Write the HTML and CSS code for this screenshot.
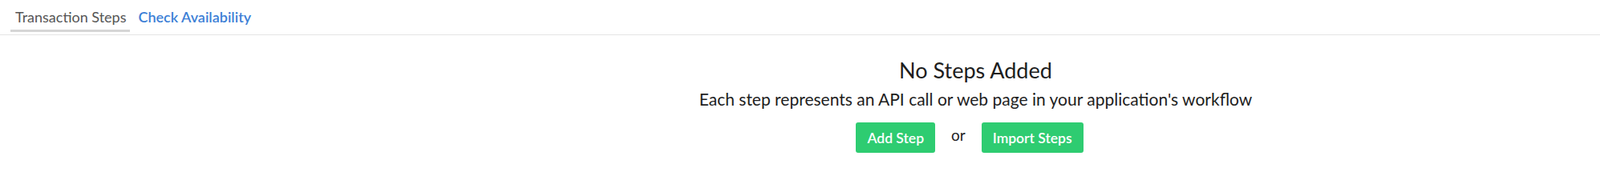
FILE: index.html
```html
<!DOCTYPE html>
<html>
<head>
<meta charset="utf-8">
<link rel="stylesheet" href="styles.css">
</head>
<body>
<nav class="tabs">
  <a class="tab tab-active">Transaction Steps</a>
  <a class="tab tab-link">Check Availability</a>
</nav>
<main class="empty">
  <h1 class="empty-title">No Steps Added</h1>
  <p class="empty-text">Each step represents an API call or web page in your application's workflow</p>
  <div class="actions">
    <button class="btn">Add Step</button>
    <span class="or">or</span>
    <button class="btn">Import Steps</button>
  </div>
</main>
</body>
</html>
```
FILE: styles.css
```css
html, body {
  margin: 0;
  padding: 0;
  background: #ffffff;
  font-family: Lato, "Open Sans", sans-serif;
}

.tabs {
  display: flex;
  gap: 4px;
  padding: 0 0 3px 13px;
  border-bottom: 1px solid #e4e4e4;
}

.tab {
  display: block;
  padding: 10px 5px 5px 6px;
  font-size: 18px;
  line-height: 22px;
  border-bottom: 3px solid transparent;
  cursor: pointer;
}

.tab-active {
  color: #555555;
  border-bottom-color: #d6d6d6;
}

.tab-link {
  color: #3d7fd6;
  font-weight: 600;
}

.empty {
  padding-left: 438px;
  display: flex;
  flex-direction: column;
  align-items: center;
}

.empty-title {
  margin: 27px 0 0;
  font-size: 27px;
  line-height: 33px;
  font-weight: 400;
  color: #1e1e1e;
}

.empty-text {
  margin: 7px 0 0;
  font-size: 21px;
  line-height: 25px;
  color: #1e1e1e;
}

.actions {
  display: flex;
  align-items: center;
  margin-top: 17px;
  margin-right: 15px;
}

.btn {
  height: 38px;
  padding: 0 14px;
  border: none;
  border-radius: 3px;
  background: #2ecc71;
  color: #ffffff;
  font-family: Lato, "Open Sans", sans-serif;
  font-size: 17.5px;
  font-weight: 600;
}

.or {
  margin: 0 20px;
  font-size: 19px;
  color: #1e1e1e;
  position: relative;
  top: -4px;
}
```
